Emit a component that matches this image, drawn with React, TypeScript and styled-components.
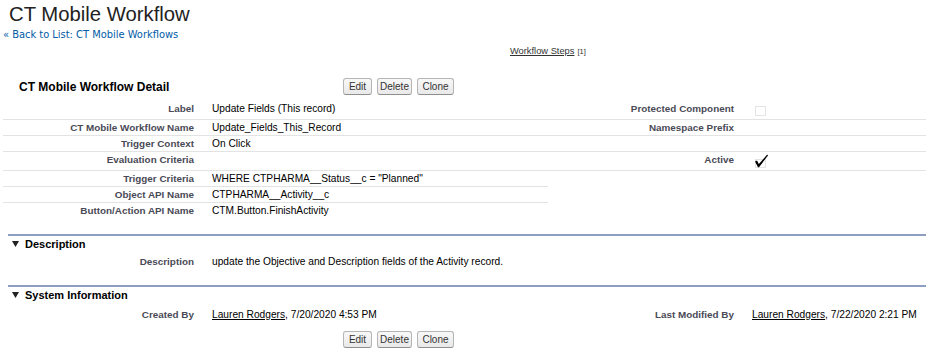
import React from "react";
import styled, { createGlobalStyle } from "styled-components";

const Global = createGlobalStyle`
  html, body { margin: 0; padding: 0; background: #ffffff; }
  body {
    font-family: "Liberation Sans", Arial, sans-serif;
    color: #000;
    overflow: hidden;
  }
`;

const Page = styled.div`
  width: 926px;
  height: 358px;
  overflow: hidden;
`;

const TitleBlock = styled.div`
  padding: 2px 0 0 9px;
`;

const Title = styled.h1`
  margin: 0;
  font-size: 20.3px;
  line-height: 24px;
  font-weight: normal;
  color: #222;
`;

const Breadcrumb = styled.a`
  display: block;
  margin: 3px 0 0 3px;
  font-family: "DejaVu Sans", Verdana, sans-serif;
  font-size: 9.9px;
  line-height: 12px;
  color: #015ba7;
  text-decoration: none;
`;

const LinksRow = styled.div`
  display: flex;
  align-items: baseline;
  gap: 3px;
  margin-top: 4px;
  padding-left: 510px;
  height: 12px;
  line-height: 12px;
`;

const RelLink = styled.a`
  font-size: 9.3px;
  color: #333;
  text-decoration: underline;
`;

const Count = styled.span`
  font-size: 7.5px;
  color: #333;
`;

const PbBar = styled.div<{ $mt: number }>`
  display: grid;
  grid-template-columns: 335px auto;
  align-items: center;
  height: 27px;
  margin: ${(p) => p.$mt}px 0 0 8px;
`;

const PbTitle = styled.h2`
  margin: 0;
  padding-left: 11px;
  font-size: 12px;
  font-weight: bold;
  color: #000;
`;

const Buttons = styled.div`
  display: flex;
  gap: 5px;
`;

const Btn = styled.button<{ $w: number }>`
  width: ${(p) => p.$w}px;
  height: 17px;
  padding: 0;
  font-family: "Liberation Sans", Arial, sans-serif;
  font-size: 10px;
  line-height: 15px;
  color: #333;
  background: linear-gradient(#f8f8f8, #e9e9e9);
  border: 1px solid #b5b5b5;
  border-bottom-color: #8f8f8f;
  border-radius: 3px;
  cursor: pointer;
`;

const DetailGrid = styled.div<{ $mt: number }>`
  display: grid;
  grid-template-columns: 199px 346px 194px 1fr;
  margin: ${(p) => p.$mt}px 0 0 3px;
`;

const LabelCell = styled.div<{ $line?: boolean }>`
  padding: 2px 8px 2px 0;
  text-align: right;
  font-size: 9.9px;
  font-weight: bold;
  line-height: 11px;
  color: #4a4a56;
  white-space: nowrap;
  border-bottom: 1px solid ${(p) => (p.$line ? "#e3e3e3" : "transparent")};
`;

const DataCell = styled.div<{ $line?: boolean }>`
  padding: 2px 0 2px 10px;
  font-size: 10.2px;
  line-height: 11px;
  color: #000;
  white-space: nowrap;
  border-bottom: 1px solid ${(p) => (p.$line ? "#e3e3e3" : "transparent")};
`;

const UserLink = styled.a`
  color: #000;
  text-decoration: underline;
`;

const CheckBox = styled.svg`
  display: block;
  width: 16px;
  height: 14px;
  margin-left: 1px;
`;

const Section = styled.div<{ $mt: number }>`
  margin: ${(p) => p.$mt}px 0 0 8px;
  border-top: 2px solid #8d9ec0;
`;

const SectionHeader = styled.h3`
  display: flex;
  align-items: center;
  gap: 6px;
  margin: 0;
  padding: 1px 0 2px 4px;
  font-size: 11px;
  line-height: 14px;
  font-weight: bold;
  color: #000;
`;

const Twisty = styled.svg`
  width: 7px;
  height: 6px;
  display: block;
`;

const SectionGrid = styled.div<{ $mt: number }>`
  display: grid;
  grid-template-columns: 194px 346px 194px 1fr;
  margin: ${(p) => p.$mt}px 0 0 -5px;
  padding-left: 5px;
`;

const Checkbox = ({ checked }: { checked?: boolean }) => (
  <CheckBox viewBox="0 0 16 14">
    <rect
      x={2.5}
      y={checked ? 5.5 : 3.5}
      width={10}
      height={checked ? 8 : 9}
      fill="none"
      stroke="#c9c9c9"
      strokeDasharray="1 1"
    />
    {checked && (
      <path d="M2 7.5 L4 6.5 L5.8 10 L14.2 0.6 L15 1.4 L6 13.2 L5 13.2 Z" fill="#000" />
    )}
  </CheckBox>
);

const TriangleIcon = () => (
  <Twisty viewBox="0 0 7 6">
    <polygon points="0,0 7,0 3.5,6" fill="#222" />
  </Twisty>
);

type Row = {
  l: string;
  v: React.ReactNode;
  rl?: string;
  rv?: React.ReactNode;
  rline?: boolean;
};

const rows: Row[] = [
  { l: "Label", v: "Update Fields (This record)", rl: "Protected Component", rv: <Checkbox />, rline: true },
  { l: "CT Mobile Workflow Name", v: "Update_Fields_This_Record", rl: "Namespace Prefix", rv: "", rline: true },
  { l: "Trigger Context", v: "On Click", rl: "", rv: "", rline: true },
  { l: "Evaluation Criteria", v: "", rl: "Active", rv: <Checkbox checked />, rline: true },
  { l: "Trigger Criteria", v: 'WHERE CTPHARMA__Status__c = "Planned"' },
  { l: "Object API Name", v: "CTPHARMA__Activity__c" },
  { l: "Button/Action API Name", v: "CTM.Button.FinishActivity" },
];

const ActionButtons = () => (
  <Buttons>
    <Btn $w={29}>Edit</Btn>
    <Btn $w={35}>Delete</Btn>
    <Btn $w={37}>Clone</Btn>
  </Buttons>
);

export default function App() {
  return (
    <Page>
      <Global />
      <TitleBlock>
        <Title>CT Mobile Workflow</Title>
      </TitleBlock>
      <Breadcrumb href="#">« Back to List: CT Mobile Workflows</Breadcrumb>
      <LinksRow>
        <RelLink href="#">Workflow Steps</RelLink>
        <Count>[1]</Count>
      </LinksRow>

      <PbBar $mt={16}>
        <PbTitle>CT Mobile Workflow Detail</PbTitle>
        <ActionButtons />
      </PbBar>

      <DetailGrid $mt={1}>
        {rows.map((r, i) => {
          const last = i === rows.length - 1;
          return (
            <React.Fragment key={r.l}>
              <LabelCell $line={!last}>{r.l}</LabelCell>
              <DataCell $line={!last}>{r.v}</DataCell>
              <LabelCell $line={r.rline}>{r.rl}</LabelCell>
              <DataCell $line={r.rline}>{r.rv}</DataCell>
            </React.Fragment>
          );
        })}
      </DetailGrid>

      <Section $mt={15}>
        <SectionHeader>
          <TriangleIcon />
          Description
        </SectionHeader>
        <SectionGrid $mt={1}>
          <LabelCell>Description</LabelCell>
          <DataCell>update the Objective and Description fields of the Activity record.</DataCell>
          <LabelCell />
          <DataCell />
        </SectionGrid>
      </Section>

      <Section $mt={15}>
        <SectionHeader>
          <TriangleIcon />
          System Information
        </SectionHeader>
        <SectionGrid $mt={3}>
          <LabelCell>Created By</LabelCell>
          <DataCell>
            <UserLink href="#">Lauren Rodgers</UserLink>, 7/20/2020 4:53 PM
          </DataCell>
          <LabelCell>Last Modified By</LabelCell>
          <DataCell>
            <UserLink href="#">Lauren Rodgers</UserLink>, 7/22/2020 2:21 PM
          </DataCell>
        </SectionGrid>
      </Section>

      <PbBar $mt={3}>
        <span />
        <ActionButtons />
      </PbBar>
    </Page>
  );
}
